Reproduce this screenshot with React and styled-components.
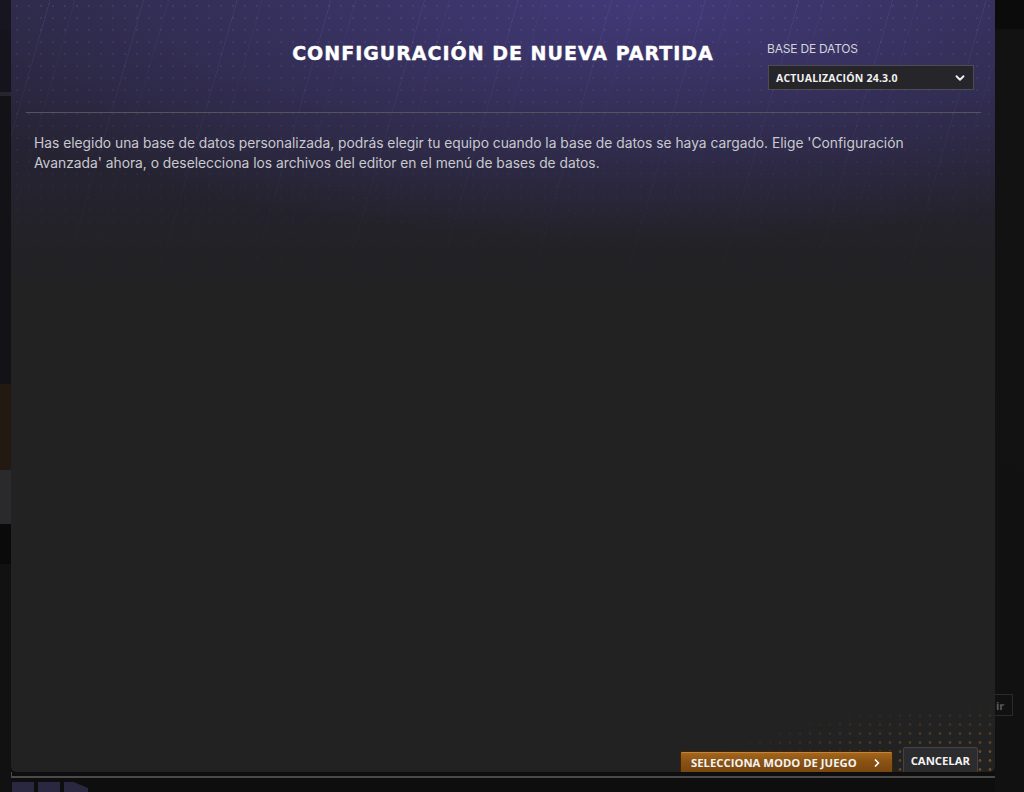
import styled, { createGlobalStyle } from 'styled-components';
import { ChevronDown, ChevronRight } from 'lucide-react';

const GlobalStyle = createGlobalStyle`
  html, body {
    margin: 0;
    padding: 0;
    background: #0e0e0f;
  }
  body {
    font-family: Inter, 'Noto Sans', sans-serif;
    overflow: hidden;
  }
`;

const Screen = styled.div`
  display: flex;
  width: 1024px;
  height: 792px;
  overflow: hidden;
  background: #0e0e0f;
`;

const LeftGutter = styled.div`
  display: flex;
  flex-direction: column;
  width: 11px;
  flex-shrink: 0;
`;

const GutterBlock = styled.div`
  height: ${({ $h }) => $h}px;
  background: ${({ $bg }) => $bg};
  flex-shrink: 0;
`;

const Column = styled.div`
  display: flex;
  flex-direction: column;
  width: 984px;
  flex-shrink: 0;
`;

const Panel = styled.div`
  position: relative;
  height: 772px;
  display: flex;
  flex-direction: column;
  border-radius: 0 0 5px 5px;
  overflow: hidden;
  background:
    radial-gradient(ellipse 760px 240px at 64% 0%, rgba(74, 64, 140, 0.72), transparent 100%),
    linear-gradient(180deg, #2b2842 0px, #28253a 90px, #252331 170px, #222226 250px, #222222 300px);

  &::before {
    content: '';
    position: absolute;
    inset: 0 0 auto 0;
    height: 300px;
    background:
      repeating-linear-gradient(106deg, transparent 0 37px, rgba(130, 120, 210, 0.14) 37px 38px, transparent 38px 61px, rgba(130, 120, 210, 0.08) 61px 62px, transparent 62px 90px),
      radial-gradient(circle, rgba(130, 120, 220, 0.18) 1px, transparent 1.6px) 0 0 / 12px 12px;
    -webkit-mask-image: linear-gradient(180deg, #000 0%, rgba(0,0,0,0.45) 45%, transparent 100%);
    mask-image: linear-gradient(180deg, #000 0%, rgba(0,0,0,0.45) 45%, transparent 100%);
    pointer-events: none;
  }

  &::after {
    content: '';
    position: absolute;
    right: 0;
    bottom: 0;
    width: 290px;
    height: 70px;
    background: radial-gradient(circle, rgba(190, 120, 40, 0.45) 1.2px, transparent 1.8px) 0 0 / 10px 9px;
    -webkit-mask-image: radial-gradient(ellipse 290px 70px at 100% 100%, #000 20%, transparent 100%);
    mask-image: radial-gradient(ellipse 290px 70px at 100% 100%, #000 20%, transparent 100%);
    pointer-events: none;
  }
`;

const Header = styled.header`
  position: relative;
  z-index: 1;
  display: grid;
  grid-template-columns: 1fr auto 1fr;
  align-items: start;
  padding: 42px 21px 22px 21px;
`;

const Title = styled.h1`
  grid-column: 2;
  margin: 0;
  font-family: 'DejaVu Sans', sans-serif;
  font-weight: 700;
  font-size: 19px;
  line-height: 22px;
  letter-spacing: 1px;
  color: #ffffff;
  white-space: nowrap;
  -webkit-text-stroke: 0.4px #ffffff;
`;

const DbPicker = styled.div`
  grid-column: 3;
  justify-self: end;
  display: flex;
  flex-direction: column;
  gap: 9px;
  width: 206px;
`;

const DbLabel = styled.span`
  font-family: Inter, sans-serif;
  font-size: 12px;
  line-height: 14px;
  color: #d4d4dc;
  letter-spacing: -0.2px;
  margin-left: -1px;
`;

const Select = styled.div`
  display: flex;
  align-items: center;
  justify-content: space-between;
  height: 25px;
  box-sizing: border-box;
  padding: 0 6px 0 7px;
  background: #262529;
  border: 1px solid #4d4c52;
  color: #f2f2f2;
  font-family: 'Open Sans', sans-serif;
  font-weight: 700;
  font-size: 10.5px;
  letter-spacing: 0.2px;
`;

const Divider = styled.hr`
  position: relative;
  z-index: 1;
  margin: 0 14px 0 15px;
  border: none;
  height: 1px;
  background: #55535c;
`;

const Content = styled.main`
  position: relative;
  z-index: 1;
  flex: 1;
  padding: 20px 0 0 23px;
`;

const Message = styled.p`
  margin: 0;
  max-width: 900px;
  font-family: Inter, sans-serif;
  font-size: 13.8px;
  line-height: 20px;
  color: #c9c9cf;
`;

const Footer = styled.footer`
  position: relative;
  z-index: 1;
  display: flex;
  justify-content: flex-end;
  align-items: flex-end;
  gap: 10px;
  padding: 0 17px 0 0;
`;

const Button = styled.button`
  display: flex;
  align-items: center;
  gap: 14px;
  box-sizing: border-box;
  margin: 0;
  font-family: 'Open Sans', sans-serif;
  font-weight: 700;
  font-size: 11.3px;
  color: #f4f4f4;
  cursor: pointer;
  border-radius: 2px;
  white-space: nowrap;

  ${({ $primary }) =>
    $primary
      ? `
    height: 23px;
    padding: 0 9px 0 10px;
    margin-bottom: -2px;
    background: linear-gradient(180deg, #a8681d 0%, #8a5314 45%, #784510 100%);
    border: 1px solid #3d2406;
    box-shadow: inset 0 1px 0 rgba(255, 190, 110, 0.35);
  `
      : `
    height: 26px;
    padding: 0 7px;
    margin-bottom: -1px;
    background: #2c2c2e;
    border: 1px solid #434345;
  `}
`;

const BottomLine = styled.div`
  height: 6px;
  border-left: 1px solid #4a4a4a;
  border-bottom: 2px solid #4a4a4a;
  box-sizing: border-box;
`;

const BottomArt = styled.div`
  display: flex;
  gap: 4px;
  margin-top: 4px;
  padding-left: 1px;
`;

const ArtTile = styled.div`
  width: ${({ $w }) => $w}px;
  height: 10px;
  background: #2a2740;
  clip-path: ${({ $slant }) => ($slant ? 'polygon(0 0, 40% 0, 100% 60%, 100% 100%, 0 100%)' : 'none')};
`;

const RightGutter = styled.div`
  flex: 1;
  display: flex;
  flex-direction: column;
  padding-top: 694px;
  background: linear-gradient(180deg, #0b0b0c 0px, #0b0b0c 28px, #121213 30px, #111112 100%);
`;

const GhostButton = styled.div`
  width: 18px;
  height: 22px;
  box-sizing: border-box;
  border: 1px solid #2b2b2d;
  border-left: none;
  display: flex;
  align-items: center;
  font-family: 'Open Sans', sans-serif;
  font-weight: 700;
  font-size: 11px;
  color: #5a5a5c;
  padding-left: 1px;
`;

export default function App() {
  return (
    <>
      <GlobalStyle />
      <Screen>
        <LeftGutter>
          <GutterBlock $h={30} $bg="#17151f" />
          <GutterBlock $h={62} $bg="#15131c" />
          <GutterBlock $h={4} $bg="#262430" />
          <GutterBlock $h={288} $bg="#131216" />
          <GutterBlock $h={86} $bg="#221a12" />
          <GutterBlock $h={54} $bg="#2a2a2c" />
          <GutterBlock $h={40} $bg="#0a0a0a" />
          <GutterBlock $h={228} $bg="#111112" />
        </LeftGutter>

        <Column>
          <Panel>
            <Header>
              <Title>CONFIGURACIÓN DE NUEVA PARTIDA</Title>
              <DbPicker>
                <DbLabel>BASE DE DATOS</DbLabel>
                <Select>
                  <span>ACTUALIZACIÓN 24.3.0</span>
                  <ChevronDown size={14} strokeWidth={3.2} color="#f0f0f0" />
                </Select>
              </DbPicker>
            </Header>
            <Divider />
            <Content>
              <Message>
                Has elegido una base de datos personalizada, podrás elegir tu equipo cuando la base de
                datos se haya cargado. Elige 'Configuración Avanzada' ahora, o deselecciona los archivos
                del editor en el menú de bases de datos.
              </Message>
            </Content>
            <Footer>
              <Button $primary>
                SELECCIONA MODO DE JUEGO
                <ChevronRight size={12} strokeWidth={3.5} color="#ffffff" />
              </Button>
              <Button>CANCELAR</Button>
            </Footer>
          </Panel>
          <BottomLine />
          <BottomArt>
            <ArtTile $w={22} />
            <ArtTile $w={22} />
            <ArtTile $w={24} $slant />
          </BottomArt>
        </Column>

        <RightGutter>
          <GhostButton>ir</GhostButton>
        </RightGutter>
      </Screen>
    </>
  );
}
